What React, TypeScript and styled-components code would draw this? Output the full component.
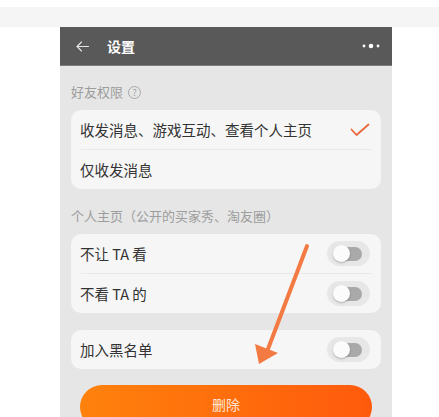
import styled, { createGlobalStyle } from "styled-components";

const GlobalStyle = createGlobalStyle`
  html, body {
    margin: 0;
    padding: 0;
    background: #ffffff;
    font-family: "Noto Sans CJK SC", "Noto Sans", sans-serif;
  }
`;

const Page = styled.div`
  width: 439px;
  height: 417px;
  overflow: hidden;
  padding-top: 7px;
  box-sizing: border-box;
`;

const TopStrip = styled.div`
  height: 20px;
  background: #f5f5f5;
`;

const Phone = styled.div`
  position: relative;
  width: 332px;
  height: 390px;
  margin-left: 60px;
  background: #e6e6e6;
  overflow: hidden;
`;

const Header = styled.header`
  height: 38px;
  background: #595959;
  border-bottom: 1px solid #7c7c7c;
  display: flex;
  align-items: center;
  padding: 0 12px 0 16px;
  color: #ffffff;
`;

const Back = styled.svg`
  margin-right: 18px;
`;

const Title = styled.h1`
  margin: 0;
  font-size: 14px;
  font-weight: 700;
  flex: 1;
`;

const Content = styled.div`
  padding: 0 11px;
`;

const SectionLabel = styled.div<{ $top: number }>`
  padding-top: ${(p) => p.$top}px;
  margin-bottom: 9px;
  font-size: 13px;
  line-height: 18px;
  color: #9d9d9d;
  display: flex;
  align-items: center;
  gap: 5px;
`;

const Help = styled.span`
  width: 11px;
  height: 11px;
  border: 1px solid #a8a8a8;
  border-radius: 50%;
  font-size: 9px;
  line-height: 11px;
  text-align: center;
  color: #a0a0a0;
`;

const Card = styled.div<{ $gap?: number }>`
  background: #f6f6f6;
  border-radius: 10px;
  margin-top: ${(p) => p.$gap ?? 0}px;
  overflow: hidden;
`;

const Row = styled.div`
  height: 39px;
  display: flex;
  align-items: center;
  justify-content: space-between;
  padding: 0 11px 0 9px;
  font-size: 14.5px;
  color: #333333;
`;

const Divider = styled.div`
  height: 1px;
  margin: 0 10px;
  background: #e9e9e9;
`;

const SwitchHalo = styled.span`
  width: 43px;
  height: 25px;
  border-radius: 13px;
  background: #e7e7e7;
  display: flex;
  align-items: center;
  justify-content: center;
  position: relative;
`;

const SwitchTrack = styled.span`
  width: 27px;
  height: 14px;
  border-radius: 7px;
  background: #a9a9a9;
  position: relative;
`;

const SwitchKnob = styled.span`
  position: absolute;
  left: -2px;
  top: -2px;
  width: 17px;
  height: 17px;
  border-radius: 50%;
  background: #fbfbfb;
  box-shadow: 0 1px 2px rgba(0, 0, 0, 0.25);
`;

const DeleteButton = styled.button`
  display: block;
  width: 292px;
  height: 44px;
  margin: 16px 0 0 9px;
  border: none;
  border-radius: 22px;
  background: linear-gradient(90deg, #ff820c 0%, #ff6c0c 55%, #ff5a0c 100%);
  color: #ffe7d6;
  font-family: inherit;
  font-size: 14px;
  padding: 0 0 6px;
`;

const Overlay = styled.svg`
  position: absolute;
  left: 0;
  top: 0;
  pointer-events: none;
`;

function Toggle() {
  return (
    <SwitchHalo>
      <SwitchTrack>
        <SwitchKnob />
      </SwitchTrack>
    </SwitchHalo>
  );
}

function Dots() {
  return (
    <svg width="18" height="6" viewBox="0 0 18 6">
      <circle cx="2" cy="3" r="1.4" fill="#fff" />
      <circle cx="9" cy="3" r="2.3" fill="#fff" />
      <circle cx="16" cy="3" r="1.4" fill="#fff" />
    </svg>
  );
}

function Check() {
  return (
    <svg width="20" height="14" viewBox="0 0 20 14">
      <path d="M1.5 6.5 L6.5 12 L18.5 1.5" fill="none" stroke="#e8673c" strokeWidth="1.8" strokeLinecap="round" strokeLinejoin="round" />
    </svg>
  );
}

export default function App() {
  return (
    <>
      <GlobalStyle />
      <Page>
        <TopStrip />
        <Phone>
          <Header>
            <Back width="13" height="11" viewBox="0 0 13 11">
              <path d="M12.5 5.5 H1 M5.5 1 L1 5.5 L5.5 10" fill="none" stroke="#e6e6e6" strokeWidth="1.1" strokeLinecap="round" strokeLinejoin="round" />
            </Back>
            <Title>设置</Title>
            <Dots />
          </Header>
          <Content>
            <SectionLabel $top={17}>
              好友权限 <Help>?</Help>
            </SectionLabel>
            <Card>
              <Row>
                收发消息、游戏互动、查看个人主页
                <Check />
              </Row>
              <Divider />
              <Row>仅收发消息</Row>
            </Card>
            <SectionLabel $top={18}>个人主页（公开的买家秀、淘友圈）</SectionLabel>
            <Card>
              <Row>
                不让 TA 看
                <Toggle />
              </Row>
              <Divider />
              <Row>
                不看 TA 的
                <Toggle />
              </Row>
            </Card>
            <Card $gap={17}>
              <Row>
                加入黑名单
                <Toggle />
              </Row>
            </Card>
            <DeleteButton>删除</DeleteButton>
          </Content>
          <Overlay width="332" height="390" viewBox="0 0 332 390">
            <line x1="247" y1="219" x2="208" y2="322" stroke="#f47a44" strokeWidth="4" strokeLinecap="round" />
            <polygon points="199,337 195,317 218,326" fill="#f47a44" />
          </Overlay>
        </Phone>
      </Page>
    </>
  );
}
